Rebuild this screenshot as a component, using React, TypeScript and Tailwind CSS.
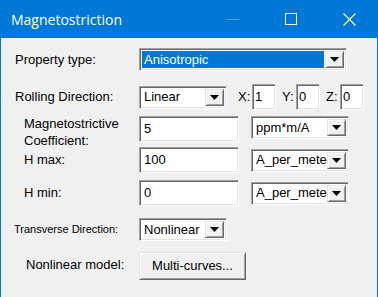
import React from 'react';

const sunken =
  'border border-t-[#a0a0a0] border-l-[#a0a0a0] border-b-white border-r-white shadow-[inset_1px_1px_0_#696969,inset_-1px_-1px_0_#e3e3e3] bg-white';
const raised =
  'border border-t-[#e3e3e3] border-l-[#e3e3e3] border-b-[#696969] border-r-[#696969] shadow-[inset_1px_1px_0_#ffffff,inset_-1px_-1px_0_#a0a0a0] bg-[#f0f0f0]';

function Arrow() {
  return (
    <div className={`${raised} flex h-full w-[19px] shrink-0 items-center justify-center`}>
      <svg width="9" height="5" viewBox="0 0 9 5">
        <path d="M0 0 H9 L4.5 5 Z" fill="#000" />
      </svg>
    </div>
  );
}

function Combo({ value, width, selected }: { value: string; width: string; selected?: boolean }) {
  return (
    <div className={`${sunken} flex h-[23px] ${width} items-stretch p-[2px]`}>
      <div
        className={`flex flex-1 items-center overflow-hidden whitespace-nowrap pl-[2px] ${
          selected ? 'mr-[1px] bg-[#0078d7] text-white' : 'text-black'
        }`}
      >
        {value}
      </div>
      <Arrow />
    </div>
  );
}

function TextBox({ value, width }: { value: string; width: string }) {
  return (
    <div className={`${sunken} flex h-[26px] ${width} items-center pl-[4px] text-black`}>{value}</div>
  );
}

function Coord({ label, value }: { label: string; value: string }) {
  return (
    <div className="flex items-center">
      <span className="w-[14px]">{label}</span>
      <div className={`${sunken} flex h-[26px] w-[24px] items-center pl-[2px]`}>{value}</div>
    </div>
  );
}

export default function App() {
  return (
    <div
      className="h-[297px] w-[378px] overflow-hidden bg-[#0078d7] text-[13px] text-black"
      style={{ fontFamily: '"Liberation Sans", Arial, sans-serif' }}
    >
      {/* Title bar */}
      <div className="flex h-[38px] items-center text-white">
        <span className="pl-[11px] text-[14px]" style={{ fontFamily: '"Open Sans", "Noto Sans", sans-serif' }}>
          Magnetostriction
        </span>
        <div className="ml-auto flex items-center">
          <div className="flex w-[58px] justify-center">
            <div className="h-px w-[12px] bg-[#4da1e6]" />
          </div>
          <div className="flex w-[58px] justify-center">
            <div className="h-[12px] w-[12px] border border-white" />
          </div>
          <div className="flex w-[58px] justify-center">
            <svg width="13" height="13" viewBox="0 0 13 13">
              <path d="M0.5 0.5 L12.5 12.5 M12.5 0.5 L0.5 12.5" stroke="#fff" strokeWidth="1.1" />
            </svg>
          </div>
        </div>
      </div>

      {/* Body */}
      <div className="mx-[1px] h-[259px] bg-[#f0f0f0] pt-[10px]">
        <div className="flex h-[23px] items-center">
          <span className="w-[138px] pl-[14px]">Property type:</span>
          <Combo value="Anisotropic" width="w-[208px]" selected />
        </div>

        <div className="mt-[13px] flex h-[26px] items-center">
          <span className="w-[138px] pl-[14px]">Rolling Direction:</span>
          <Combo value="Linear" width="w-[88px]" />
          <div className="ml-[11px] flex gap-[6px]">
            <Coord label="X:" value="1" />
            <Coord label="Y:" value="0" />
            <Coord label="Z:" value="0" />
          </div>
        </div>

        <div className="mt-[6px] flex h-[26px] items-start">
          <span className="-mt-[1px] w-[138px] pl-[23px] leading-[17px]">
            Magnetostrictive
            <br />
            Coefficient:
          </span>
          <TextBox value="5" width="w-[100px]" />
          <div className="ml-[12px]">
            <Combo value="ppm*m/A" width="w-[98px]" />
          </div>
        </div>

        <div className="mt-[5px] flex h-[26px] items-center">
          <span className="w-[138px] pl-[23px]">H max:</span>
          <TextBox value="100" width="w-[100px]" />
          <div className="ml-[12px]">
            <Combo value="A_per_mete" width="w-[98px]" />
          </div>
        </div>

        <div className="mt-[7px] flex h-[26px] items-center">
          <span className="w-[138px] pl-[23px]">H min:</span>
          <TextBox value="0" width="w-[100px]" />
          <div className="ml-[12px]">
            <Combo value="A_per_mete" width="w-[98px]" />
          </div>
        </div>

        <div className="mt-[12px] flex h-[23px] items-center">
          <span className="w-[138px] pl-[13px] text-[11px]">Transverse Direction:</span>
          <Combo value="Nonlinear" width="w-[88px]" />
        </div>

        <div className="mt-[11px] flex h-[28px] items-center">
          <span className="mb-[3px] w-[138px] pl-[25px]">Nonlinear model:</span>
          <div className={`${raised} flex h-[28px] w-[107px] items-center justify-center`}>Multi-curves...</div>
        </div>
      </div>
    </div>
  );
}
